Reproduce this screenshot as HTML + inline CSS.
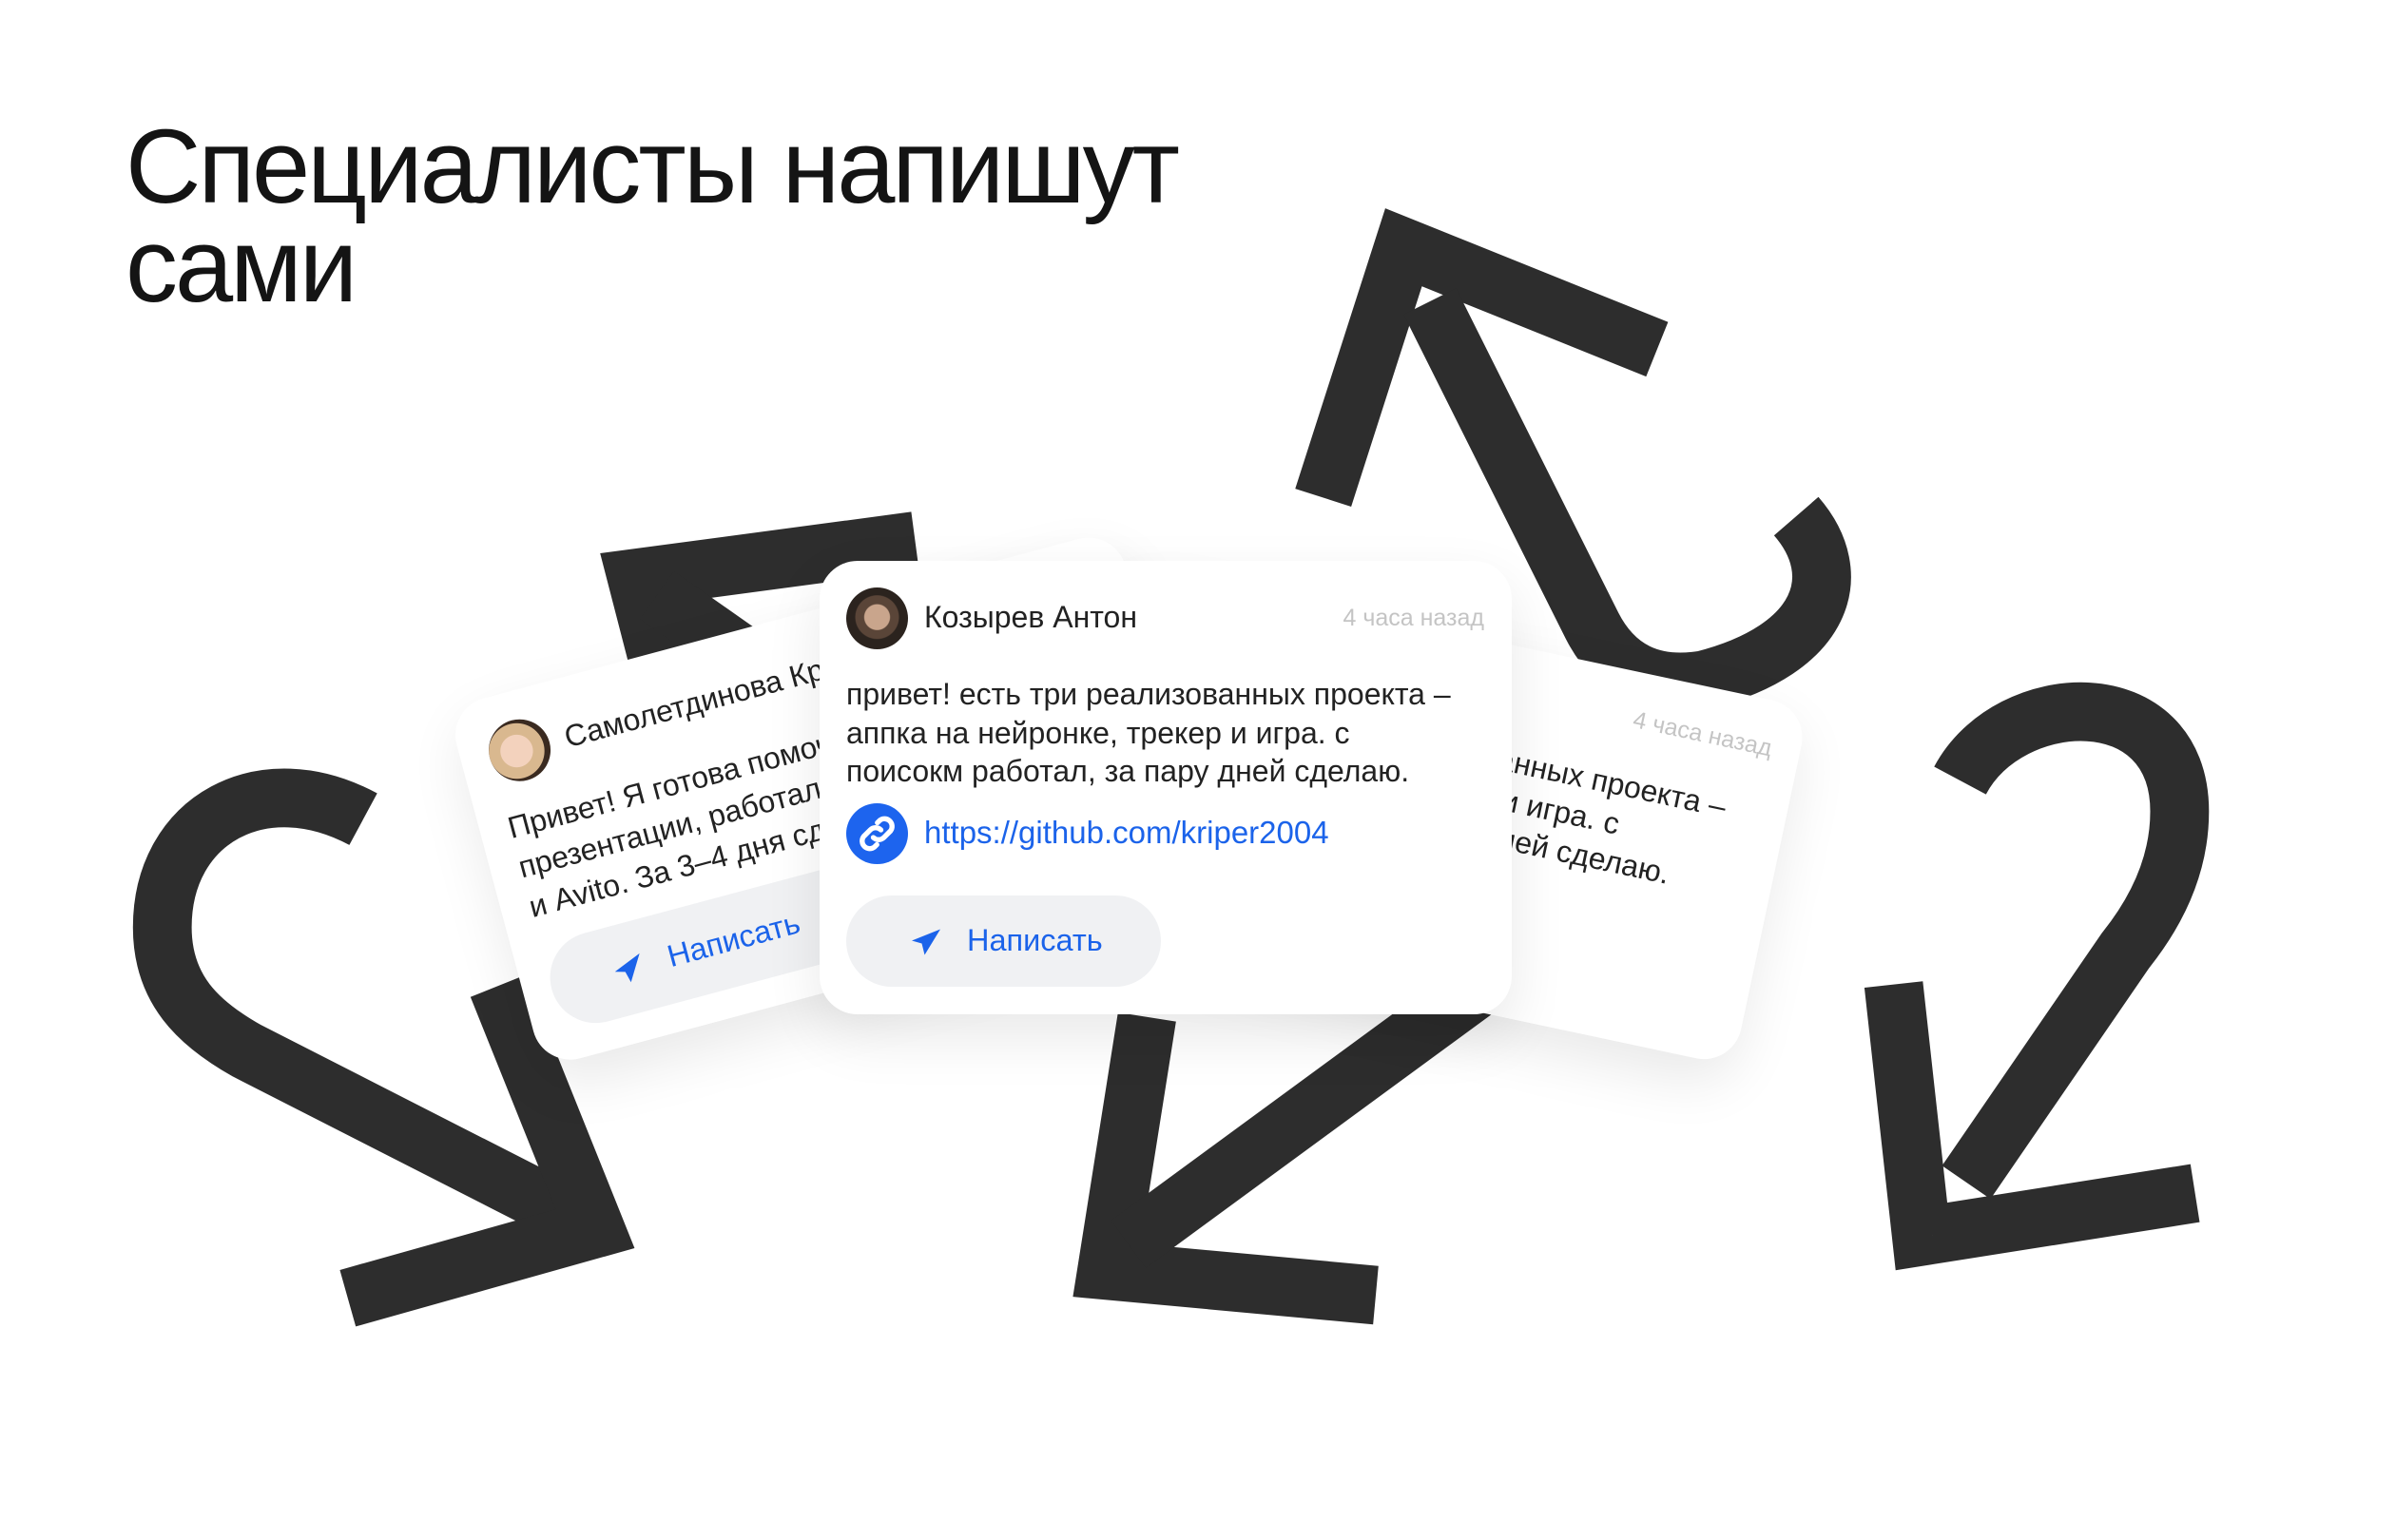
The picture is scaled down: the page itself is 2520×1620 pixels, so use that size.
<!DOCTYPE html>
<html><head><meta charset="utf-8"><style>
html,body{margin:0;padding:0;background:#fff;}
body{width:2520px;height:1620px;position:relative;overflow:hidden;font-family:"Liberation Sans","Noto Sans CJK SC",sans-serif;}
h1{position:absolute;left:132px;top:124px;margin:0;font-weight:400;font-size:110px;line-height:104px;letter-spacing:-3px;color:#141414;}
svg.bg{position:absolute;left:0;top:0;}
.card{position:absolute;background:#fff;border-radius:40px;box-shadow:0 24px 60px rgba(0,0,0,0.09);width:728px;}
.av{position:absolute;width:65px;height:65px;border-radius:50%;}
.name{position:absolute;font-size:32px;color:#222;}
.time{position:absolute;font-size:25px;color:#c4c4c4;}
.txt{position:absolute;font-size:32px;line-height:40.5px;color:#222;white-space:nowrap;}
.btn{position:absolute;height:96px;width:331px;border-radius:48px;background:#f0f1f3;}
.btn span{position:absolute;left:127px;top:29px;font-size:32.5px;color:#1b63ea;}
.btn svg{position:absolute;left:66px;top:31px;}
</style></head><body>
<h1>Специалисты напишут<br>сами</h1>
<svg class="bg" width="2520" height="1620" viewBox="0 0 1550 996.4" fill="none" stroke="#2d2d2d" stroke-width="38">
<path d="M235,530 C170,495 105,530 105,600 C105,640 128,662 160,680 L360,782"/>
<polyline points="322,638 385,795 225,840" stroke-linejoin="miter"/>
<polyline points="592,350 412,374 427,432" stroke-linejoin="miter"/>
<path d="M425,385 L560,480"/>
<polyline points="1072,226 908,160 856,322" stroke-linejoin="miter"/>
<path d="M925,195 L1030,405 Q1052,448 1102,440 C1180,420 1195,372 1162,334"/>
<polyline points="742,658 716,822 890,838" stroke-linejoin="miter"/>
<path d="M730,805 L955,640"/>
<path d="M1268,505 C1300,445 1410,440 1410,525 C1410,560 1395,590 1375,615 L1272,765"/>
<polyline points="1225,637 1243,800 1420,772" stroke-linejoin="miter"/>
</svg>

<!-- left card -->
<div class="card" style="left:470px;top:745px;height:392px;transform:rotate(-15deg);transform-origin:0 0;">
  <div class="av" style="left:30px;top:30px;background:radial-gradient(circle at 45% 50%,#f3d2bd 0 35%,#d9b88f 36% 60%,#3a2a20 61%);"></div>
  <div class="name" style="left:112px;top:44px;">Самолетдинова Кристина</div>
  <div class="txt" style="left:30px;top:118px;line-height:43px;">Привет! Я готова помочь с<br>презентации, работала с<br>и Avito. За 3–4 дня сделаю</div>
  <div class="btn" style="left:30px;top:266px;width:420px;"><svg width="36" height="36" viewBox="0 0 24 24"><path d="M22 3 L2 11 L9 13 L11 21 Z" fill="#1b63ea"/></svg><span>Написать</span></div>
</div>

<!-- right card -->
<div class="card" style="left:1175px;top:745px;height:385px;transform:rotate(12deg);transform-origin:100% 0;">
  <div class="time" style="right:30px;top:36px;">4 часа назад</div>
  <div class="txt" style="left:28px;top:100px;">привет! есть три реализованных проекта –<br>аппка на нейронке, трекер и игра. с<br>поисокм работал, за пару дней сделаю.</div>
</div>

<!-- main card -->
<div class="card" style="left:862px;top:590px;height:477px;">
  <div class="av" style="left:28px;top:28px;background:radial-gradient(circle at 50% 48%,#c9a58c 0 28%,#5a4538 30% 48%,#2b231e 50%);"></div>
  <div class="name" style="left:110px;top:41px;">Козырев Антон</div>
  <div class="time" style="right:29px;top:46px;">4 часа назад</div>
  <div class="txt" style="left:28px;top:120px;">привет! есть три реализованных проекта –<br>аппка на нейронке, трекер и игра. с<br>поисокм работал, за пару дней сделаю.</div>
  <div style="position:absolute;left:28px;top:255px;width:65px;height:64px;border-radius:50%;background:#1d64ee;">
    <svg width="65" height="64" viewBox="0 0 24 24" fill="none" stroke="#fff" stroke-width="2" stroke-linecap="round"><path d="M10.5 13.5a3 3 0 0 0 4.2 0l2.6-2.6a3 3 0 0 0-4.2-4.2l-1 1"/><path d="M13.5 10.5a3 3 0 0 0-4.2 0l-2.6 2.6a3 3 0 0 0 4.2 4.2l1-1"/></svg>
  </div>
  <div style="position:absolute;left:110px;top:267px;font-size:33px;color:#1b63ea;">https://github.com/kriper2004</div>
  <div class="btn" style="left:28px;top:352px;"><svg width="36" height="36" viewBox="0 0 24 24"><path d="M22 3 L2 11 L9 13 L11 21 Z" fill="#1b63ea"/></svg><span>Написать</span></div>
</div>
</body></html>
